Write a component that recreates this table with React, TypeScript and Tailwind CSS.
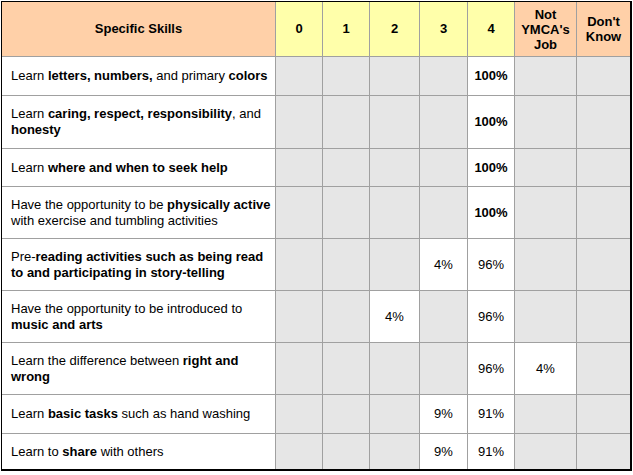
type Row = {
  label: React.ReactNode;
  h: string;
  vals: (string | null)[];
  bold?: boolean;
};

const rows: Row[] = [
  {
    label: (
      <>
        Learn <b>letters, numbers,</b> and primary <b>colors</b>
      </>
    ),
    h: "h-[38px]",
    vals: [null, null, null, null, "100%", null, null],
    bold: true,
  },
  {
    label: (
      <>
        Learn <b>caring, respect, responsibility</b>, and <b>honesty</b>
      </>
    ),
    h: "h-[52px]",
    vals: [null, null, null, null, "100%", null, null],
    bold: true,
  },
  {
    label: (
      <>
        Learn <b>where and when to seek help</b>
      </>
    ),
    h: "h-[37px]",
    vals: [null, null, null, null, "100%", null, null],
    bold: true,
  },
  {
    label: (
      <>
        Have the opportunity to be <b>physically active</b> with exercise and tumbling activities
      </>
    ),
    h: "h-[51px]",
    vals: [null, null, null, null, "100%", null, null],
    bold: true,
  },
  {
    label: (
      <>
        Pre-<b>reading activities such as being read to and participating in story-telling</b>
      </>
    ),
    h: "h-[51px]",
    vals: [null, null, null, "4%", "96%", null, null],
  },
  {
    label: (
      <>
        Have the opportunity to be introduced to <b>music and arts</b>
      </>
    ),
    h: "h-[51px]",
    vals: [null, null, "4%", null, "96%", null, null],
  },
  {
    label: (
      <>
        Learn the difference between <b>right and wrong</b>
      </>
    ),
    h: "h-[51px]",
    vals: [null, null, null, null, "96%", "4%", null],
  },
  {
    label: (
      <>
        Learn <b>basic tasks</b> such as hand washing
      </>
    ),
    h: "h-[38px]",
    vals: [null, null, null, "9%", "91%", null, null],
  },
  {
    label: (
      <>
        Learn to <b>share</b> with others
      </>
    ),
    h: "h-[35px]",
    vals: [null, null, null, "9%", "91%", null, null],
  },
];

const App = () => {
  return (
    <div className="min-h-[475px] w-[633px] bg-white pl-px pt-px font-['Liberation_Sans',Arial,sans-serif] text-[13px] text-black">
      <div className="w-[631px] border-b-2 border-l border-r-2 border-t border-black">
        <div className="grid grid-cols-[273px_46px_46px_49px_47px_46px_61px_53px] gap-px bg-[#a0a0a0]">
          <div className="flex h-[54px] items-center justify-center bg-[#ffd0a8] font-bold">
            Specific Skills
          </div>
          {["0", "1", "2", "3", "4"].map((n) => (
            <div
              key={n}
              className="flex items-center justify-center bg-[#ffffaa] font-bold"
            >
              {n}
            </div>
          ))}
          <div className="flex items-center justify-center bg-[#ffd0a8] text-center font-bold leading-[15px]">
            Not
            <br />
            YMCA's
            <br />
            Job
          </div>
          <div className="flex items-center justify-center bg-[#ffd0a8] text-center font-bold leading-[15px]">
            Don't
            <br />
            Know
          </div>

          {rows.map((r, i) => (
            <div key={i} className="contents">
              <div
                className={`flex ${r.h} items-center bg-white pl-[9px] pr-1 leading-[16px]`}
              >
                <span>{r.label}</span>
              </div>
              {r.vals.map((v, j) => (
                <div
                  key={j}
                  className={`flex items-center justify-center ${
                    v ? "bg-white" : "bg-[#e6e6e6]"
                  } ${r.bold ? "font-bold" : ""}`}
                >
                  {v}
                </div>
              ))}
            </div>
          ))}
        </div>
      </div>
    </div>
  );
};

export default App;
